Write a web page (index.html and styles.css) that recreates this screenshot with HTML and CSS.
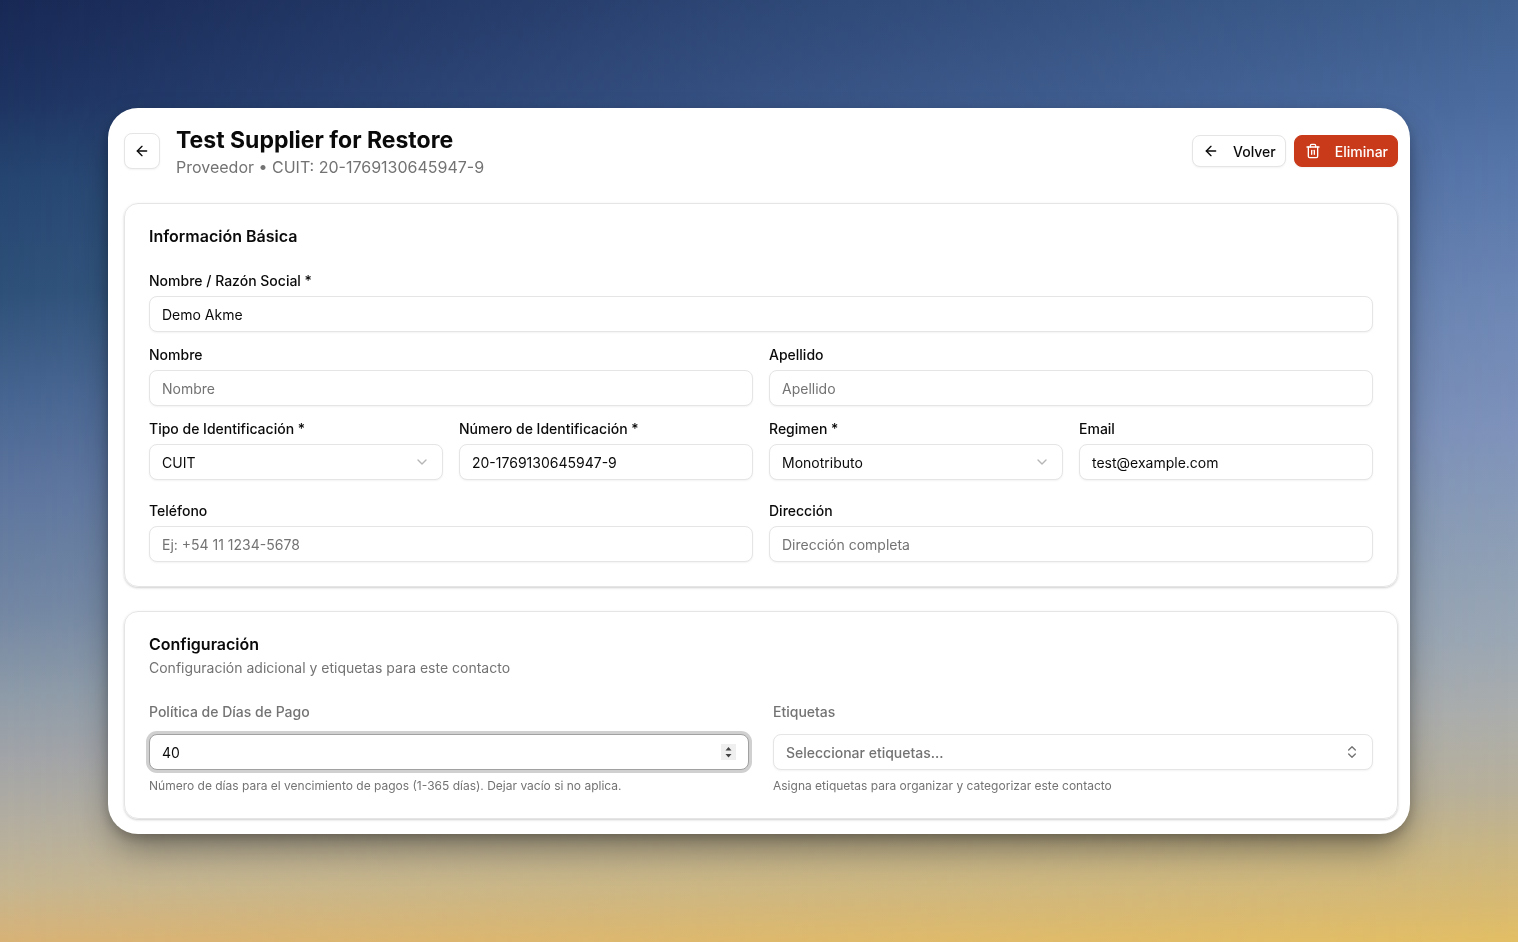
FILE: index.html
```html
<!DOCTYPE html>
<html lang="es">
<head>
    <meta charset="UTF-8">
    <meta name="viewport" content="width=device-width, initial-scale=1.0">
    <title>Test Supplier for Restore</title>
    <link rel="stylesheet" href="styles.css">
</head>
<body>

    <main class="panel">
        <header class="header">
            <button type="button" class="btn btn-icon" aria-label="Volver">
                <svg class="icon" viewBox="0 0 24 24"><path d="m12 19-7-7 7-7"/><path d="M19 12H5"/></svg>
            </button>
            <div class="heading">
                <h1>Test Supplier for Restore</h1>
                <p>Proveedor • CUIT: 20-1769130645947-9</p>
            </div>
            <div class="actions">
                <button type="button" class="btn">
                    <svg class="icon" viewBox="0 0 24 24"><path d="m12 19-7-7 7-7"/><path d="M19 12H5"/></svg>
                    Volver
                </button>
                <button type="button" class="btn btn-danger">
                    <svg class="icon" viewBox="0 0 24 24"><path d="M3 6h18"/><path d="M19 6v14a2 2 0 0 1-2 2H7a2 2 0 0 1-2-2V6"/><path d="M8 6V4a2 2 0 0 1 2-2h4a2 2 0 0 1 2 2v2"/><path d="M10 11v6"/><path d="M14 11v6"/></svg>
                    Eliminar
                </button>
            </div>
        </header>

        <section class="card">
            <h2 class="card-title">Información Básica</h2>
            <div class="form-grid">
                <div class="field full">
                    <label for="razon">Nombre / Razón Social *</label>
                    <input id="razon" class="control" type="text" value="Demo Akme">
                </div>
                <div class="field half">
                    <label for="nombre">Nombre</label>
                    <input id="nombre" class="control" type="text" placeholder="Nombre">
                </div>
                <div class="field half">
                    <label for="apellido">Apellido</label>
                    <input id="apellido" class="control" type="text" placeholder="Apellido">
                </div>
                <div class="field">
                    <label for="tipo">Tipo de Identificación *</label>
                    <div class="select">
                        <select id="tipo" class="control">
                            <option>CUIT</option>
                        </select>
                        <svg class="icon chevron" viewBox="0 0 24 24"><path d="m6 9 6 6 6-6"/></svg>
                    </div>
                </div>
                <div class="field">
                    <label for="numero">Número de Identificación *</label>
                    <input id="numero" class="control" type="text" value="20-1769130645947-9">
                </div>
                <div class="field">
                    <label for="regimen">Regimen *</label>
                    <div class="select">
                        <select id="regimen" class="control">
                            <option>Monotributo</option>
                        </select>
                        <svg class="icon chevron" viewBox="0 0 24 24"><path d="m6 9 6 6 6-6"/></svg>
                    </div>
                </div>
                <div class="field">
                    <label for="email">Email</label>
                    <input id="email" class="control" type="email" value="test@example.com">
                </div>
            </div>
            <div class="form-grid contact">
                <div class="field half">
                    <label for="telefono">Teléfono</label>
                    <input id="telefono" class="control" type="tel" placeholder="Ej: +54 11 1234-5678">
                </div>
                <div class="field half">
                    <label for="direccion">Dirección</label>
                    <input id="direccion" class="control" type="text" placeholder="Dirección completa">
                </div>
            </div>
        </section>

        <section class="card">
            <h2 class="card-title">Configuración</h2>
            <p class="card-description">Configuración adicional y etiquetas para este contacto</p>
            <div class="config-grid">
                <div class="field">
                    <label for="dias">Política de Días de Pago</label>
                    <input id="dias" class="control active" type="number" min="1" max="365" value="40">
                    <p class="hint">Número de días para el vencimiento de pagos (1-365 días). Dejar vacío si no aplica.</p>
                </div>
                <div class="field">
                    <label for="etiquetas">Etiquetas</label>
                    <button type="button" id="etiquetas" class="control combobox">
                        Seleccionar etiquetas...
                        <svg class="icon" viewBox="0 0 24 24"><path d="m7 15 5 5 5-5"/><path d="m7 9 5-5 5 5"/></svg>
                    </button>
                    <p class="hint">Asigna etiquetas para organizar y categorizar este contacto</p>
                </div>
            </div>
        </section>
    </main>

</body>
</html>
```
FILE: styles.css
```css
* {
    box-sizing: border-box;
}

body {
    margin: 0;
    min-height: 100vh;
    padding: 108px;
    font-family: Inter, sans-serif;
    font-size: 14px;
    color: #0a0a0a;
    background: linear-gradient(to bottom, #3f6090 0%, #4c6ca0 11%, #5977ab 19%, #6d87b5 32%, #7f93bb 46%, #8c9eb6 57%, #9ba7b4 68%, #acaeac 76%, #b8b09a 84%, #c9b684 90%, #d8ba72 96%, #e3bf65 100%);
}

/* darker sky on the left, fading out to the right */
body::before {
    content: "";
    position: fixed;
    inset: 0;
    z-index: -1;
    background: linear-gradient(to bottom, #182855 0%, #1d3260 10%, #254570 19%, #2d5078 31%, #466490 42%, #5a739d 51%, #7387a3 65%, #8e9ba8 74%, #a0a3a8 80%, #b2ada0 87%, #c4b592 94%, #d8b276 100%);
    mask-image: linear-gradient(to right, #000 0%, rgba(0, 0, 0, 0.45) 50%, transparent 100%);
}

h1,
h2,
p {
    margin: 0;
}

.panel {
    padding: 16px 12px 15px 16px;
    background: #fff;
    border-radius: 30px;
    box-shadow: 0 18px 36px -6px rgba(0, 0, 0, 0.4), 0 4px 12px rgba(0, 0, 0, 0.2);
}

.header {
    display: flex;
    align-items: center;
    gap: 16px;
    margin-bottom: 25px;
}

.heading {
    flex: 1;
}

.heading h1 {
    font-size: 23px;
    line-height: 32px;
    font-weight: 700;
}

.heading p {
    font-size: 16px;
    line-height: 22px;
    color: #737373;
}

.actions {
    display: flex;
    gap: 8px;
}

.icon {
    width: 16px;
    height: 16px;
    flex: none;
    fill: none;
    stroke: currentColor;
    stroke-width: 2;
    stroke-linecap: round;
    stroke-linejoin: round;
}

.btn {
    display: flex;
    align-items: center;
    justify-content: center;
    gap: 14px;
    height: 32px;
    padding: 0 9px 0 10px;
    font: inherit;
    font-weight: 500;
    color: inherit;
    background: #fff;
    border: 1px solid #e5e5e5;
    border-radius: 8px;
    box-shadow: 0 1px 2px rgba(0, 0, 0, 0.05);
}

.btn-icon {
    width: 36px;
    height: 36px;
    padding: 0;
}

.btn-danger {
    color: #fff;
    background: #c93a1b;
    border-color: #c93a1b;
}

.card {
    padding: 24px;
    border: 1px solid #e5e5e5;
    border-radius: 14px;
    box-shadow: 0 1px 3px rgba(0, 0, 0, 0.1), 0 1px 2px rgba(0, 0, 0, 0.1);
}

.card + .card {
    margin-top: 24px;
}

.card-title {
    font-size: 16px;
    line-height: 16px;
    font-weight: 600;
}

.card-description {
    margin-top: 6px;
    line-height: 20px;
    color: #737373;
}

.form-grid {
    display: grid;
    grid-template-columns: repeat(4, 1fr);
    gap: 16px;
    margin-top: 30px;
}

.form-grid.contact {
    margin-top: 24px;
}

.full {
    grid-column: span 4;
}

.half {
    grid-column: span 2;
}

.field {
    display: flex;
    flex-direction: column;
    gap: 8px;
    min-width: 0;
}

.field label {
    line-height: 14px;
    font-weight: 500;
}

.control {
    width: 100%;
    height: 36px;
    padding: 0 12px;
    font: inherit;
    color: inherit;
    background: #fff;
    border: 1px solid #e5e5e5;
    border-radius: 8px;
    box-shadow: 0 1px 2px rgba(0, 0, 0, 0.05);
    outline: none;
}

.control::placeholder {
    color: #737373;
}

.control:focus,
.control.active {
    border-color: #a1a1a1;
    box-shadow: 0 0 0 3px #d0d0d0;
}

.control[type="number"]::-webkit-inner-spin-button {
    appearance: none;
    width: 15px;
    height: 16px;
    opacity: 1;
    background: #efefef url("data:image/svg+xml,%3Csvg xmlns='http://www.w3.org/2000/svg' viewBox='0 0 15 16'%3E%3Cpath fill='%23444' d='M4.5 6.5 7.5 3l3 3.5zM4.5 10h6l-3 3.5z'/%3E%3C/svg%3E") center no-repeat;
}

.select {
    position: relative;
}

.select select {
    display: block;
    appearance: none;
}

.chevron {
    position: absolute;
    top: 10px;
    right: 13px;
    color: #b5b5b5;
    pointer-events: none;
}

.config-grid {
    display: grid;
    grid-template-columns: 1fr 1fr;
    gap: 24px;
    margin-top: 27px;
}

.config-grid label {
    margin-bottom: 7px;
    color: #737373;
}

.combobox {
    display: flex;
    align-items: center;
    justify-content: space-between;
    font-weight: 500;
    color: #737373;
}

.hint {
    font-size: 12px;
    line-height: 16px;
    color: #737373;
}
```
